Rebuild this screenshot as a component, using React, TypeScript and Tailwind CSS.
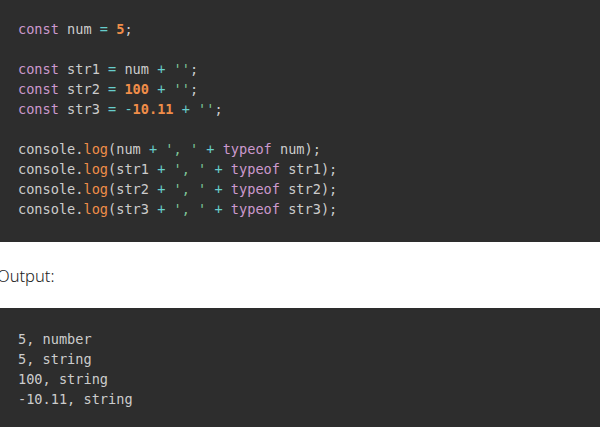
import React from "react";

const K = ({ children }: { children: React.ReactNode }) => <span className="text-[#cc99cd]">{children}</span>;
const N = ({ children }: { children: React.ReactNode }) => <span className="text-[#f08d49] font-bold">{children}</span>;
const O = ({ children }: { children: React.ReactNode }) => <span className="text-[#67cdcc]">{children}</span>;
const S = ({ children }: { children: React.ReactNode }) => <span className="text-[#7ec699]">{children}</span>;

const Line = ({ children }: { children?: React.ReactNode }) => <div className="h-[20px] whitespace-pre">{children}</div>;

const LogLine = ({ v }: { v: string }) => (
  <Line>
    console.<span className="text-[#f08d49]">log</span>({v} <O>+</O> <S>', '</S> <O>+</O> <K>typeof</K> {v});
  </Line>
);

export default function App() {
  return (
    <div className="w-[600px] h-[427px] overflow-hidden bg-white">
      <div
        className="h-[242px] bg-[#2d2d2d] text-[#cccccc] pl-[18px] pt-[19px] text-[13.6px] leading-[20px]"
        style={{ fontFamily: '"DejaVu Sans Mono", monospace' }}
      >
        <Line>
          <K>const</K> num <O>=</O> <N>5</N>;
        </Line>
        <Line />
        <Line>
          <K>const</K> str1 <O>=</O> num <O>+</O> <S>''</S>;
        </Line>
        <Line>
          <K>const</K> str2 <O>=</O> <N>100</N> <O>+</O> <S>''</S>;
        </Line>
        <Line>
          <K>const</K> str3 <O>=</O> <O>-</O><N>10.11</N> <O>+</O> <S>''</S>;
        </Line>
        <Line />
        <LogLine v="num" />
        <LogLine v="str1" />
        <LogLine v="str2" />
        <LogLine v="str3" />
      </div>
      <div
        className="h-[66px] flex items-center pt-[2px] -ml-[3px] text-[16.5px] font-light text-[#222222]"
        style={{ fontFamily: '"Noto Sans", sans-serif' }}
      >
        Output:
      </div>
      <div
        className="h-[119px] bg-[#2d2d2d] text-[#cccccc] pl-[18px] pt-[21px] text-[13.6px] leading-[20px]"
        style={{ fontFamily: '"DejaVu Sans Mono", monospace' }}
      >
        <Line>5, number</Line>
        <Line>5, string</Line>
        <Line>100, string</Line>
        <Line>-10.11, string</Line>
      </div>
    </div>
  );
}
